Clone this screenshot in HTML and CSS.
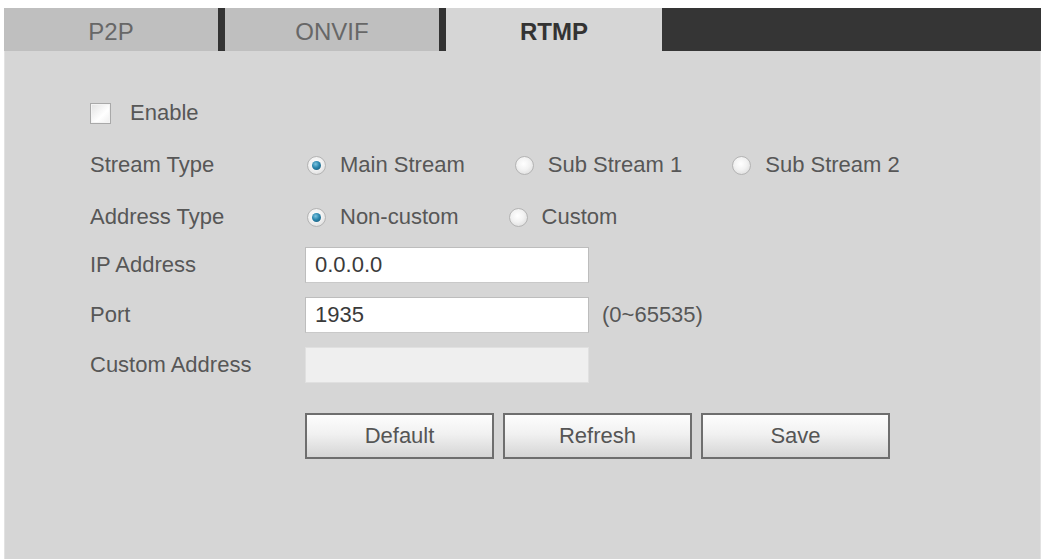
FILE: index.html
```html
<!DOCTYPE html>
<html lang="en">
<head>
<meta charset="utf-8">
<title>RTMP</title>
<link rel="stylesheet" href="styles.css">
</head>
<body>
<div class="page">
  <div class="tabs">
    <div class="tab tab-sep">P2P</div>
    <div class="tab tab-sep">ONVIF</div>
    <div class="tab tab-active">RTMP</div>
    <div class="tab-fill"></div>
  </div>
  <div class="panel">
    <div class="options">
      <div class="row">
        <label class="check-item"><span class="checkbox"></span><span>Enable</span></label>
      </div>
      <div class="row">
        <span class="label">Stream Type</span>
        <div class="choices">
          <span class="choice"><span class="radio on"></span>Main Stream</span>
          <span class="choice"><span class="radio"></span>Sub Stream 1</span>
          <span class="choice"><span class="radio"></span>Sub Stream 2</span>
        </div>
      </div>
      <div class="row">
        <span class="label">Address Type</span>
        <div class="choices">
          <span class="choice"><span class="radio on"></span>Non-custom</span>
          <span class="choice"><span class="radio"></span>Custom</span>
        </div>
      </div>
    </div>
    <div class="fields">
      <div class="row">
        <span class="label">IP Address</span>
        <div class="input">0.0.0.0</div>
      </div>
      <div class="row">
        <span class="label">Port</span>
        <div class="input">1935</div>
        <span class="hint">(0~65535)</span>
      </div>
      <div class="row">
        <span class="label">Custom Address</span>
        <div class="input disabled"></div>
      </div>
    </div>
    <div class="actions">
      <button class="btn">Default</button>
      <button class="btn">Refresh</button>
      <button class="btn">Save</button>
    </div>
  </div>
</div>
</body>
</html>
```

FILE: styles.css
```css
html, body {
  margin: 0;
  padding: 0;
  background: #ffffff;
  font-family: "Liberation Sans", Arial, sans-serif;
}

.page {
  padding: 8px 4px 0 4px;
  height: 551px;
  display: flex;
  flex-direction: column;
}

.tabs {
  display: flex;
  height: 43px;
}

.tab {
  flex: 0 0 214px;
  background: #bfbfbf;
  color: #676767;
  font-size: 24px;
  display: flex;
  align-items: center;
  justify-content: center;
  padding-top: 4px;
  box-sizing: border-box;
}

.tab-sep {
  border-right: 7px solid #333333;
  flex-basis: 221px;
}

.tab-active {
  background: #d6d6d6;
  color: #333333;
  font-weight: bold;
  flex-basis: 216px;
}

.tab-fill {
  flex: 1;
  background: #353535;
}

.panel {
  flex: 1;
  background: #d6d6d6;
  border-left: 1px solid #e2e2e2;
  border-right: 1px solid #e2e2e2;
  padding: 44px 0 0 85px;
  color: #575757;
  font-size: 22px;
}

.options {
  display: flex;
  flex-direction: column;
  gap: 16px;
}

.fields {
  display: flex;
  flex-direction: column;
  gap: 14px;
  margin-top: 12px;
}

.row {
  display: flex;
  align-items: center;
  height: 36px;
}

.label {
  flex: 0 0 215px;
}

.check-item {
  display: flex;
  align-items: center;
  gap: 19px;
}

.checkbox {
  width: 19px;
  height: 19px;
  border: 1px solid #a9a9a9;
  background: linear-gradient(135deg, #e2e2e2, #ffffff 60%, #eeeeee);
  box-shadow: inset 0 0 0 1px #f4f4f4;
}

.choices {
  display: flex;
  align-items: center;
  gap: 50px;
  padding-left: 2px;
}

.choice {
  display: flex;
  align-items: center;
  gap: 14px;
}

.radio {
  width: 17px;
  height: 17px;
  border-radius: 50%;
  border: 1px solid #b4b4b4;
  background: radial-gradient(circle at 45% 40%, #ffffff 0%, #f2f2f2 45%, #d4d4d4 100%);
  display: flex;
  align-items: center;
  justify-content: center;
}

.radio.on::after {
  content: "";
  width: 9px;
  height: 9px;
  border-radius: 50%;
  background: radial-gradient(circle at 40% 35%, #7cc4e0 0%, #2a86ad 45%, #15506e 100%);
}

.input {
  width: 284px;
  height: 36px;
  box-sizing: border-box;
  background: #ffffff;
  border: 1px solid #bdbdbd;
  border-bottom-color: #c9c9c9;
  padding-left: 9px;
  display: flex;
  align-items: center;
  color: #3a3a3a;
  font-size: 22px;
}

.input.disabled {
  background: #efefef;
  border-color: #e0e0e0;
}

.hint {
  margin-left: 13px;
}

.actions {
  display: flex;
  gap: 9px;
  margin-top: 30px;
  padding-left: 215px;
}

.btn {
  width: 189px;
  height: 46px;
  border: 2px solid #6e6e6e;
  background: linear-gradient(#fdfdfd, #f1f1f1 45%, #d5d5d5);
  color: #555555;
  font-family: "Liberation Sans", Arial, sans-serif;
  font-size: 22px;
  padding: 0;
}
```
